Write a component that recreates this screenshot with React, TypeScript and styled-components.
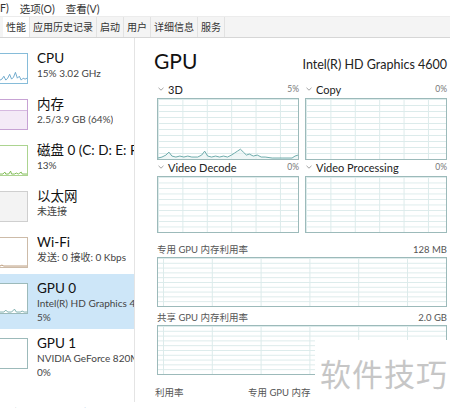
import React from 'react'
import styled, { createGlobalStyle } from 'styled-components'

const FONT = `Lato, "Noto Sans CJK SC", "Noto Sans", sans-serif`
const GPU_EDGE = '#9cbaba'
const GRID = '#dcebeb'

const GlobalStyle = createGlobalStyle`
  html, body {
    margin: 0;
    padding: 0;
    background: #fff;
  }
  body {
    font-family: ${FONT};
    color: #1f1f1f;
  }
`

const Window = styled.div`
  position: relative;
  width: 450px;
  height: 408px;
  overflow: hidden;
  background: #fff;
`

const MenuBar = styled.div`
  display: flex;
  align-items: center;
  gap: 11px;
  height: 16px;
  font-size: 10.5px;
  color: #333;
`

const TabBar = styled.div`
  display: flex;
  height: 20px;
  padding-left: 3px;
  background: #f4f4f4;
  border-top: 1px solid #ececec;
  border-bottom: 1px solid #d6d6d6;
`

const Tab = styled.div<{ $active?: boolean }>`
  padding: 0 3px;
  font-size: 10px;
  line-height: 20px;
  color: #333;
  background: ${p => (p.$active ? '#fff' : 'transparent')};
  border-right: 1px solid #e2e2e2;
`

const Body = styled.div`
  display: flex;
  height: 364px;
`

const Sidebar = styled.div`
  flex-shrink: 0;
  width: 135px;
  box-sizing: border-box;
  padding-top: 6px;
  border-right: 1px solid #e4e4e4;
`

const SideItem = styled.div<{ $active?: boolean }>`
  display: flex;
  gap: 9px;
  min-height: 46px;
  box-sizing: border-box;
  padding: 6px 0 5px;
  background: ${p => (p.$active ? '#cde6f8' : 'transparent')};
`

const Thumb = styled.div<{ $color: string; $bg?: string }>`
  flex-shrink: 0;
  width: 28px;
  height: 31px;
  margin-top: 3px;
  box-sizing: border-box;
  border: 1px solid ${p => p.$color};
  border-left: none;
  background: ${p => p.$bg || '#fff'};

  svg {
    display: block;
    width: 100%;
    height: 100%;
  }
`

const ItemText = styled.div`
  display: flex;
  flex-direction: column;
  min-width: 0;
  overflow: hidden;
  white-space: nowrap;
`

const ItemTitle = styled.div`
  font-size: 13.5px;
  line-height: 16px;
  color: #111;
`

const ItemSub = styled.div`
  font-size: 10px;
  line-height: 14px;
  color: #444;
`

const Main = styled.div`
  flex: 1;
  min-width: 0;
  padding: 10px 3px 0 22px;
  overflow: hidden;
`

const Header = styled.div`
  display: flex;
  align-items: baseline;
  justify-content: space-between;
  height: 26px;
  margin-left: -3px;
`

const Title = styled.div`
  font-size: 21px;
  line-height: 26px;
  color: #111;
`

const Model = styled.div`
  font-size: 12.5px;
  color: #222;
  white-space: nowrap;
`

const ChartGrid = styled.div`
  display: grid;
  grid-template-columns: 1fr 1fr;
  column-gap: 6px;
  margin-top: 8px;
`

const ChartHead = styled.div`
  display: flex;
  align-items: center;
  justify-content: space-between;
  height: 14px;
  margin-bottom: 2px;
`

const ChartName = styled.div`
  display: flex;
  align-items: center;
  gap: 4px;
  padding-left: 1px;
  font-size: 11px;
  color: #222;
`

const Pct = styled.div`
  font-size: 8.5px;
  color: #777;
`

const Chart = styled.div<{ $h: number; $step: number; $offset: number }>`
  height: ${p => p.$h}px;
  box-sizing: border-box;
  border: 1px solid ${GPU_EDGE};
  background-color: #fff;
  background-image: linear-gradient(to right, ${GRID} 1px, transparent 1px),
    linear-gradient(to bottom, ${GRID} 1px, transparent 1px);
  background-size: ${p => p.$step}px 100%, 100% 10%;
  background-position: ${p => p.$offset}px 0, 0 0;

  svg {
    display: block;
    width: 100%;
    height: 100%;
  }
`

const Section = styled.div<{ $mt: number }>`
  margin-top: ${p => p.$mt}px;
`

const WideHead = styled.div`
  display: flex;
  justify-content: space-between;
  height: 12px;
  line-height: 12px;
  margin-bottom: 1px;
  font-size: 9.5px;
  color: #555;
`

const Stats = styled.div`
  display: grid;
  grid-template-columns: 93px auto;
  margin: 12px 0 0 -2px;
  font-size: 9.5px;
  line-height: 12px;
  color: #555;
`

const Footer = styled.div`
  display: flex;
  align-items: center;
  gap: 8px;
  height: 20px;
  font-size: 10.5px;
  color: #333;
`

const FooterLink = styled.div`
  display: flex;
  align-items: center;
  gap: 6px;
  margin-left: 25px;
  color: #2a6db5;
`

const Watermark = styled.div`
  position: absolute;
  left: 315px;
  top: 340px;
  width: 135px;
  height: 68px;
  box-sizing: border-box;
  padding: 14px 0 0 5px;
  background: #fff;
  font-family: "Noto Sans CJK SC", sans-serif;
  font-size: 31px;
  line-height: 37px;
  letter-spacing: 1px;
  color: #c6c6c6;
`

const Chevron = () => (
  <svg width="6" height="4" viewBox="0 0 6 4">
    <path d="M0.5 0.8 L3 3.2 L5.5 0.8" fill="none" stroke="#999" strokeWidth="0.9" />
  </svg>
)

type Item = {
  title: string
  lines: string[]
  color: string
  bg?: string
  points?: string
  stroke?: string
  active?: boolean
}

const items: Item[] = [
  {
    title: 'CPU',
    lines: ['15% 3.02 GHz'],
    color: '#86bcd9',
    points: '0,27 2,26 4,23 6,27 8,25 10,21 12,26 14,24 16,19 18,25 20,23 22,27 24,25 26,26 28,25',
    stroke: '#5d9fc7',
  },
  {
    title: '内存',
    lines: ['2.5/3.9 GB (64%)'],
    color: '#c7a2d4',
    bg: 'linear-gradient(to top, #f4eaf7 63%, #d6b9e0 63%, #d6b9e0 calc(63% + 1px), #fff calc(63% + 1px))',
  },
  {
    title: '磁盘 0 (C: D: E: F:',
    lines: ['13%'],
    color: '#acd490',
    points: '0,29 3,29 5,27 6,29 9,29 11,26 12,29 15,29 17,28 19,29 22,27 23,29 28,29',
    stroke: '#6fb33f',
  },
  { title: '以太网', lines: ['未连接'], color: '#cfcfcf', bg: '#f3f3f3' },
  {
    title: 'Wi-Fi',
    lines: ['发送: 0 接收: 0 Kbps'],
    color: '#cdbba8',
    points: '0,29 2,28 4,29 28,29',
    stroke: '#b08a66',
  },
  {
    title: 'GPU 0',
    lines: ['Intel(R) HD Graphics 4600', '5%'],
    color: GPU_EDGE,
    points: '0,29 4,29 6,27 8,29 12,29 15,26 17,29 21,29 23,28 25,29 28,29',
    stroke: '#6ea5a5',
    active: true,
  },
  { title: 'GPU 1', lines: ['NVIDIA GeForce 820M', '0%'], color: GPU_EDGE },
]

const engines = [
  { name: '3D', pct: '5%', h: 62, graph: true },
  { name: 'Copy', pct: '0%', h: 62 },
  { name: 'Video Decode', pct: '0%', h: 57 },
  { name: 'Video Processing', pct: '0%', h: 57 },
]

const GRAPH_3D =
  '0,60 4,59 8,57 11,54 14,58 18,59 22,58 26,59 30,58 34,59 40,59 44,57 47,53 50,58 54,59 58,58 62,59 66,58 70,59 74,57 77,55 80,53 83,51 86,54 89,57 92,56 96,58 100,57 104,59 108,59 115,60 125,60 135,60 138,58 141,57'

export default function App() {
  return (
    <Window>
      <GlobalStyle />
      <MenuBar>
        <span>F)</span>
        <span>选项(O)</span>
        <span>查看(V)</span>
      </MenuBar>
      <TabBar>
        {['性能', '应用历史记录', '启动', '用户', '详细信息', '服务'].map((t, i) => (
          <Tab key={t} $active={i === 0}>
            {t}
          </Tab>
        ))}
      </TabBar>
      <Body>
        <Sidebar>
          {items.map(it => (
            <SideItem key={it.title} $active={it.active}>
              <Thumb $color={it.color} $bg={it.bg}>
                {it.points && (
                  <svg viewBox="0 0 28 30" preserveAspectRatio="none">
                    <polyline points={it.points} fill="none" stroke={it.stroke} strokeWidth="0.9" />
                  </svg>
                )}
              </Thumb>
              <ItemText>
                <ItemTitle>{it.title}</ItemTitle>
                {it.lines.map(l => (
                  <ItemSub key={l}>{l}</ItemSub>
                ))}
              </ItemText>
            </SideItem>
          ))}
        </Sidebar>
        <Main>
          <Header>
            <Title>GPU</Title>
            <Model>Intel(R) HD Graphics 4600</Model>
          </Header>
          <ChartGrid>
            {engines.map(e => (
              <div key={e.name}>
                <ChartHead>
                  <ChartName>
                    <Chevron />
                    {e.name}
                  </ChartName>
                  <Pct>{e.pct}</Pct>
                </ChartHead>
                <Chart $h={e.h} $step={24.4} $offset={0}>
                  {e.graph && (
                    <svg viewBox="0 0 141 61" preserveAspectRatio="none">
                      <polygon points={`${GRAPH_3D} 141,61 0,61`} fill="#e6f1f1" opacity="0.6" />
                      <polyline points={GRAPH_3D} fill="none" stroke="#5fa3a3" strokeWidth="0.9" />
                    </svg>
                  )}
                </Chart>
              </div>
            ))}
          </ChartGrid>
          <Section $mt={11}>
            <WideHead>
              <span>专用 GPU 内存利用率</span>
              <span>128 MB</span>
            </WideHead>
            <Chart $h={50} $step={48.8} $offset={5} />
          </Section>
          <Section $mt={5}>
            <WideHead>
              <span>共享 GPU 内存利用率</span>
              <span>2.0 GB</span>
            </WideHead>
            <Chart $h={50} $step={48.8} $offset={5} />
          </Section>
          <Stats>
            <span>利用率</span>
            <span>专用 GPU 内存</span>
          </Stats>
        </Main>
      </Body>
      <Footer>
        <span>信息(D)</span>
        <FooterLink>
          <svg width="9" height="9" viewBox="0 0 9 9">
            <circle cx="4.5" cy="4.5" r="3.6" fill="none" stroke="#777" strokeWidth="1" />
            <path d="M4.5 4.5 L4.5 1.5" stroke="#2a6db5" strokeWidth="1" />
          </svg>
          <span>打开资源监视器</span>
        </FooterLink>
      </Footer>
      <Watermark>软件技巧</Watermark>
    </Window>
  )
}
